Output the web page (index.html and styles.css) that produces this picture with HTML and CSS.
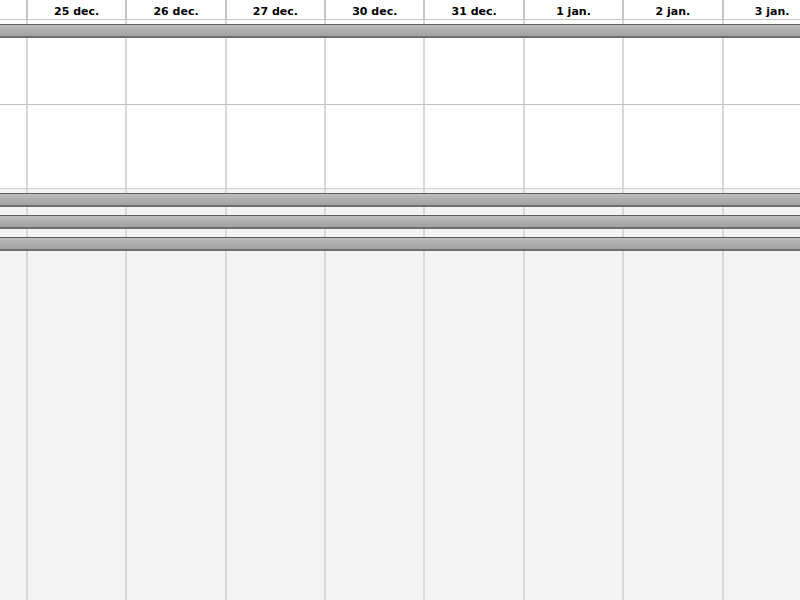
FILE: index.html
```html
<!DOCTYPE html>
<html>
<head>
<meta charset="utf-8">
<link rel="stylesheet" href="styles.css">
</head>
<body>
<div class="timeline">
  <div class="header">
    <div class="stub"></div>
    <div class="day">25 dec.</div>
    <div class="day">26 dec.</div>
    <div class="day">27 dec.</div>
    <div class="day">30 dec.</div>
    <div class="day">31 dec.</div>
    <div class="day">1 jan.</div>
    <div class="day">2 jan.</div>
    <div class="day">3 jan.</div>
  </div>
  <div class="spacer"></div>
  <div class="bar"></div>
  <div class="row row-a"></div>
  <div class="row row-b"></div>
  <div class="lower">
    <div class="bar"></div>
    <div class="bar"></div>
    <div class="bar"></div>
  </div>
</div>
</body>
</html>
```

FILE: styles.css
```css
html, body {
  margin: 0;
  padding: 0;
  width: 800px;
  height: 600px;
  overflow: hidden;
  background: #f2f2f2;
}

.timeline {
  display: flex;
  flex-direction: column;
  height: 600px;
  --vlines: repeating-linear-gradient(to right,
      transparent 0 26px,
      #d8d8d8 26px 28px,
      transparent 28px 99.36px);
}

.header {
  display: flex;
  height: 19px;
  border-bottom: 1px solid #c4c4c4;
  background: repeating-linear-gradient(to right,
      transparent 0 26px,
      #c6c6c6 26px 28px,
      transparent 28px 99.36px), #ffffff;
  font-family: "DejaVu Sans", sans-serif;
  font-weight: bold;
  font-size: 11px;
  color: #000;
}

.stub {
  flex: 0 0 27px;
}

.day {
  flex: 0 0 99.36px;
  text-align: center;
  line-height: 23px;
}

.spacer {
  height: 4px;
  background: var(--vlines), #ffffff;
}

.bar {
  height: 11px;
  border-top: 1px solid #5e5e5e;
  border-bottom: 2px solid #6e6e6e;
  background: linear-gradient(to bottom, #bdbdbd 0%, #adadad 50%, #a3a3a3 100%);
}

.row {
  background: var(--vlines), #ffffff;
}

.row-a {
  height: 66px;
  border-bottom: 1px solid #c0c0c0;
}

.row-b {
  height: 83px;
  border-bottom: 1px solid #d2d2d2;
}

.lower {
  flex: 1;
  display: flex;
  flex-direction: column;
  gap: 8px;
  padding-top: 4px;
  background: var(--vlines), #f3f3f3;
}
```
